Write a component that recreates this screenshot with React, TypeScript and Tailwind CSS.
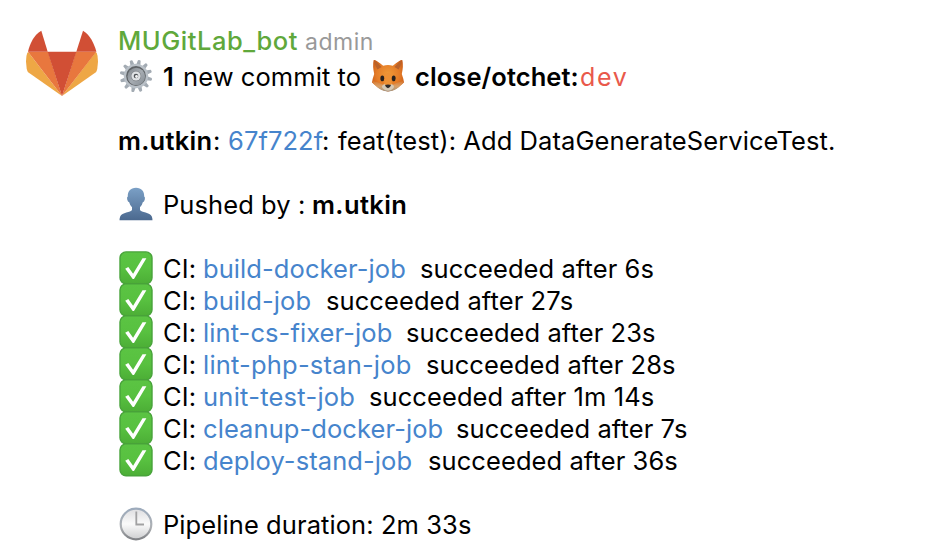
import type { ReactNode } from "react";

function Logo() {
  return (
    <svg viewBox="26 25 72 72" className="h-[72px] w-[72px] shrink-0">
      <defs>
        <clipPath id="disc"><circle cx="62" cy="61.5" r="36" /></clipPath>
      </defs>
      <g clipPath="url(#disc)">
        <path d="M28 51.7 20 66.5 62 96Z" fill="#eea745" />
        <path d="M96 51.7 104 66.5 62 96Z" fill="#eea745" />
        <path d="M26 51.7H48L62 96 28 51.7Z" fill="#e8773e" />
        <path d="M98 51.7H76L62 96 96.3 51.7Z" fill="#e8773e" />
      </g>
      <path d="M47.6 51.7H76.4L62 96Z" fill="#d14f35" />
      <path d="M28 51.7C30 43 34 35 41.3 30.7L47.7 51.7Z" fill="#d14f35" />
      <path d="M96.4 51.7C94 43 90 35 83 30.7L76.3 51.7Z" fill="#d14f35" />
    </svg>
  );
}

const teeth = Array.from({ length: 12 }, (_, i) => i * 30);

function Gear() {
  return (
    <svg viewBox="0 0 34 34" className="h-[34px] w-[34px]">
      <defs>
        <linearGradient id="steel" x1="0" y1="0" x2="1" y2="1">
          <stop offset="0" stopColor="#7f858b" />
          <stop offset="0.5" stopColor="#a6acb2" />
          <stop offset="1" stopColor="#858c93" />
        </linearGradient>
      </defs>
      {teeth.map((a) => (
        <path key={a} d="M14.9 6 15.6 1.2Q17 0 18.4 1.2L19.1 6Z" fill="#a3abb3" transform={`rotate(${a + 12} 17 17)`} />
      ))}
      <circle cx="17" cy="17" r="12.2" fill="#b9c0c7" />
      <circle cx="17" cy="17" r="9.9" fill="#5f6367" />
      <circle cx="17.3" cy="17.5" r="8.8" fill="url(#steel)" />
      <circle cx="17" cy="17" r="5.2" fill="#7d8287" />
      <circle cx="17" cy="17" r="4.6" fill="#dfe2e5" />
      <circle cx="17" cy="17" r="2.3" fill="#505458" />
      <circle cx="17.5" cy="17.5" r="1.4" fill="#f4f5f6" />
    </svg>
  );
}

function Fox() {
  return (
    <svg viewBox="0 0 34 34" className="h-[34px] w-[34px]">
      <defs>
        <radialGradient id="fur" cx="0.5" cy="0.45" r="0.6">
          <stop offset="0" stopColor="#f09a38" />
          <stop offset="0.6" stopColor="#e57c27" />
          <stop offset="1" stopColor="#c65a18" />
        </radialGradient>
        <linearGradient id="ruff" x1="0" y1="0" x2="0" y2="1">
          <stop offset="0" stopColor="#d8772c" />
          <stop offset="0.5" stopColor="#dba066" />
          <stop offset="1" stopColor="#a09585" />
        </linearGradient>
      </defs>
      <path d="M2.6 1.2Q4.4 .4 12.2 6.8Q17 5.4 21.8 6.8Q29.6 .4 31.4 1.2Q32.6 7 30.8 15Q32.6 20 33 23.5L30 26Q25 31.5 17 32.4Q9 31.5 4 26L1 23.5Q1.4 20 3.2 15Q1.4 7 2.6 1.2Z" fill="url(#fur)" />
      <path d="M3.2 1.8Q6.5 3.4 10.6 8L6.4 10.6Q3.6 6 3.2 1.8ZM30.8 1.8Q27.5 3.4 23.4 8L27.6 10.6Q30.4 6 30.8 1.8Z" fill="#b9622a" />
      <path d="M1.4 22Q8 23 13 26L17 29L21 26Q26 23 32.6 22Q32 25 29 27Q24 32.4 17 32.4Q10 32.4 5 27Q2 25 1.4 22Z" fill="url(#ruff)" />
      <path d="M14 24.5Q9.6 26.8 11.6 29.2Q13.5 31.6 17 31.8Q20.5 31.6 22.4 29.2Q24.4 26.8 20 24.5Z" fill="#d6c8b4" />
      <path d="M14.2 15Q17 13 19.8 15L20.8 25Q17 28 13.2 25Z" fill="#ee9135" />
      <ellipse cx="11.3" cy="19.4" rx="1.9" ry="2.8" fill="#27211f" />
      <ellipse cx="22.7" cy="19.4" rx="1.9" ry="2.8" fill="#27211f" />
      <path d="M14 26Q17 24.8 20 26Q19.5 28.5 17 29.2Q14.5 28.5 14 26Z" fill="#302b2a" />
    </svg>
  );
}

function Person() {
  return (
    <svg viewBox="0 0 34 34" className="h-[34px] w-[34px]">
      <defs>
        <linearGradient id="bust" x1="0" y1="0" x2="0" y2="1">
          <stop offset="0" stopColor="#7ba0c6" />
          <stop offset="1" stopColor="#4b698f" />
        </linearGradient>
      </defs>
      <path d="M17 .7C11.5.7 8.5 4.2 8.8 9.5Q7.6 10 8.2 12.5Q8.8 15 10.2 15.2Q11 18.5 13 20.3V23C12 25.2 2.8 25.5 1.3 29.2Q.5 31 .5 33.2H33.5Q33.5 31 32.7 29.2C31.2 25.5 22 25.2 21 23V20.3Q23 18.5 23.8 15.2Q25.2 15 25.8 12.5Q26.4 10 25.2 9.5C25.5 4.2 22.5.7 17 .7Z" fill="url(#bust)" />
    </svg>
  );
}

function Check() {
  return (
    <svg viewBox="0 0 34 34" className="h-[34px] w-[34px]">
      <defs>
        <linearGradient id="leaf" x1="0" y1="0" x2="0" y2="1">
          <stop offset="0" stopColor="#5bc443" />
          <stop offset="0.5" stopColor="#58c140" />
          <stop offset="1" stopColor="#4cae36" />
        </linearGradient>
      </defs>
      <rect x="1" y=".9" width="32" height="31.8" rx="6" fill="url(#leaf)" stroke="#48a33a" strokeWidth="1.4" />
      <path d="M6.2 17.7 9.3 16 14.1 22.8 23.5 7.2H27.4L15 28H13.7Z" fill="#fff" />
    </svg>
  );
}

function Clock() {
  return (
    <svg viewBox="0 0 34 34" className="h-[34px] w-[34px]">
      <defs>
        <linearGradient id="dial" x1="0" y1="0" x2="0" y2="1">
          <stop offset="0" stopColor="#dedee0" />
          <stop offset="0.5" stopColor="#fafafa" />
          <stop offset="1" stopColor="#cdced0" />
        </linearGradient>
        <linearGradient id="rim" x1="0" y1="0" x2="0" y2="1">
          <stop offset="0" stopColor="#9dabbc" />
          <stop offset="0.6" stopColor="#adb0b4" />
          <stop offset="1" stopColor="#808286" />
        </linearGradient>
      </defs>
      <circle cx="17" cy="17" r="15.3" fill="url(#dial)" stroke="url(#rim)" strokeWidth="2.2" />
      <path d="M17.3 4.5V17.5H25" fill="none" stroke="#a1a1a2" strokeWidth="1.8" />
    </svg>
  );
}

function Row({ children }: { children?: ReactNode }) {
  return <div className="flex h-8 items-center">{children}</div>;
}

function Icon({ children }: { children: ReactNode }) {
  return <span className="-mt-[7px] -mb-1 ml-px mr-[10px] block h-[34px] w-[34px] shrink-0">{children}</span>;
}

const jobs = [
  { name: "build-docker-job", time: "6s", box: "w-[217px]" },
  { name: "build-job", time: "27s", box: "w-[123px]" },
  { name: "lint-cs-fixer-job", time: "23s", box: "w-[203px]" },
  { name: "lint-php-stan-job", time: "28s", box: "w-[223px] tracking-[0.2px]" },
  { name: "unit-test-job", time: "1m 14s", box: "w-[166px] tracking-[0.25px]" },
  { name: "cleanup-docker-job", time: "7s", box: "w-[253px]" },
  { name: "deploy-stand-job", time: "36s", box: "w-[225px]" },
];

export default function App() {
  return (
    <main className="flex h-[554px] w-[932px] gap-[20px] overflow-hidden bg-white pl-[26px] pt-[25px] font-['Inter','Liberation_Sans',sans-serif] text-[25.5px] leading-8 tracking-[0.08px] whitespace-pre text-black">
      <Logo />
      <section className="flex min-w-0 flex-col">
        <div className="flex h-9 items-baseline">
          <span className="w-[187px] tracking-[0.53px] font-medium text-[#60a83b]">MUGitLab_bot</span>
          <span className="text-[23px] tracking-[0.5px] text-[#999]">admin</span>
        </div>
        <Row>
          <Icon><Gear /></Icon>
          <span className="w-[20px] font-semibold">1</span>
          <span className="w-[187px]">new commit to</span>
          <Icon><Fox /></Icon>
          <span className="w-[165px] font-semibold">close/otchet:</span>
          <span className="text-[25px] tracking-[1.7px] text-[#e9594b]">dev</span>
        </Row>
        <Row />
        <Row>
          <span className="w-[95px] tracking-[0.25px] font-semibold">m.utkin</span>
          <span className="w-[15px]">:</span>
          <span className="w-[94px] text-[#4684cc]">67f722f</span>
          <span className="w-[16px]">:</span>
          <span>feat(test): Add DataGenerateServiceTest.</span>
        </Row>
        <Row />
        <Row>
          <Icon><Person /></Icon>
          <span className="w-[149px]">Pushed by :</span>
          <span className="tracking-[0.4px] font-semibold">m.utkin</span>
        </Row>
        <Row />
        {jobs.map((job) => (
          <Row key={job.name}>
            <Icon><Check /></Icon>
            <span className="w-[40px]">CI:</span>
            <span className={`${job.box} text-[#4684cc]`}>{job.name}</span>
            <span>succeeded after {job.time}</span>
          </Row>
        ))}
        <Row />
        <Row>
          <Icon><Clock /></Icon>
          <span>Pipeline duration: 2m 33s</span>
        </Row>
      </section>
    </main>
  );
}
